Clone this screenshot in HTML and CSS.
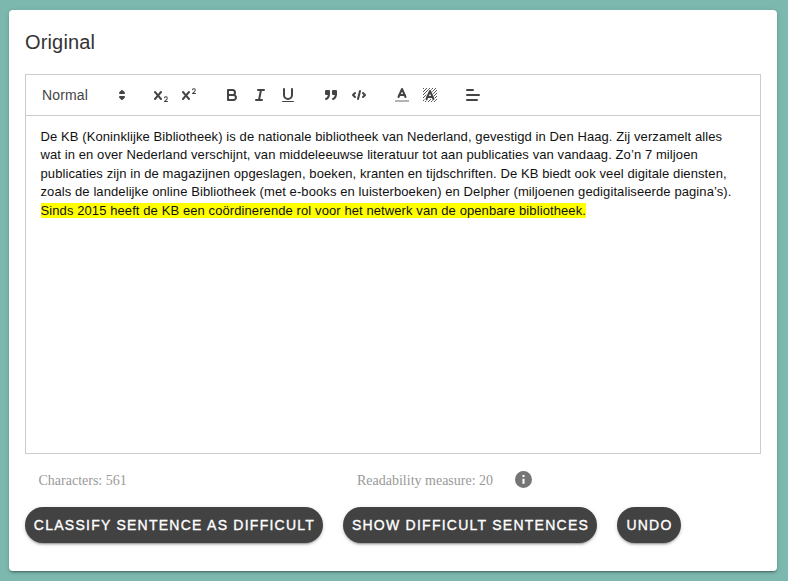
FILE: index.html
```html
<!DOCTYPE html>
<html lang="nl">
<head>
<meta charset="utf-8">
<title>Original</title>
<link rel="stylesheet" href="styles.css">
</head>
<body>
<main class="card">
  <h1 class="title">Original</h1>
  <section class="editor">
    <div class="toolbar">
      <div class="formats">
        <div class="picker"><span>Normal</span>
          <svg class="icon" viewBox="0 0 18 18"><polygon class="fill-stroke" points="7 11 9 13 11 11 7 11"/><polygon class="fill-stroke" points="7 7 9 5 11 7 7 7"/></svg>
        </div>
      </div>
      <div class="formats">
        <button class="tool" aria-label="Subscript"><svg class="icon" viewBox="0 0 18 18"><path class="fill" d="M15.5,15H13.861a3.858,3.858,0,0,0,1.914-2.975,1.8,1.8,0,0,0-1.6-1.751A1.921,1.921,0,0,0,12.021,11.7a0.50013,0.50013,0,1,0,.957.291h0a0.914,0.914,0,0,1,1.053-.725,0.81,0.81,0,0,1,.744.762c0,1.076-1.16971,1.86982-1.93971,2.43082A1.45639,1.45639,0,0,0,12,15.5a0.5,0.5,0,0,0,.5.5h3A0.5,0.5,0,0,0,15.5,15Z"/><path class="fill" d="M9.65,5.241a1,1,0,0,0-1.409.108L6,7.964,3.759,5.349A1,1,0,0,0,2.192,6.59178Q2.21541,6.6213,2.241,6.649L4.684,9.5,2.241,12.35A1,1,0,0,0,3.71,13.70722q0.02557-.02768.049-0.05722L6,11.036,8.241,13.65a1,1,0,1,0,1.567-1.24277Q9.78459,12.3777,9.759,12.35L7.316,9.5,9.759,6.651A1,1,0,0,0,9.65,5.241Z"/></svg></button>
        <button class="tool" aria-label="Superscript"><svg class="icon" viewBox="0 0 18 18"><path class="fill" d="M15.5,7H13.861a4.015,4.015,0,0,0,1.914-2.975,1.8,1.8,0,0,0-1.6-1.751A1.922,1.922,0,0,0,12.021,3.7a0.5,0.5,0,1,0,.957.291,0.917,0.917,0,0,1,1.053-.725,0.81,0.81,0,0,1,.744.762c0,1.077-1.164,1.925-1.934,2.486A1.423,1.423,0,0,0,12,7.5a0.5,0.5,0,0,0,.5.5h3A0.5,0.5,0,0,0,15.5,7Z"/><path class="fill" d="M9.651,5.241a1,1,0,0,0-1.41.108L6,7.964,3.759,5.349a1,1,0,1,0-1.519,1.3L4.683,9.5,2.241,12.35a1,1,0,1,0,1.519,1.3L6,11.036,8.241,13.65a1,1,0,0,0,1.519-1.3L7.317,9.5,9.759,6.651A1,1,0,0,0,9.651,5.241Z"/></svg></button>
      </div>
      <div class="formats">
        <button class="tool" aria-label="Bold"><svg class="icon" viewBox="0 0 18 18"><path class="stroke" d="M5,4H9.5A2.5,2.5,0,0,1,12,6.5v0A2.5,2.5,0,0,1,9.5,9H5A0,0,0,0,1,5,9V4A0,0,0,0,1,5,4Z"/><path class="stroke" d="M5,9h5.5A2.5,2.5,0,0,1,13,11.5v0A2.5,2.5,0,0,1,10.5,14H5a0,0,0,0,1,0,0V9A0,0,0,0,1,5,9Z"/></svg></button>
        <button class="tool" aria-label="Italic"><svg class="icon" viewBox="0 0 18 18"><path class="stroke" d="M7 4H13M5 14H11M8 14L10 4"/></svg></button>
        <button class="tool" aria-label="Underline"><svg class="icon" viewBox="0 0 18 18"><path class="stroke" d="M5,3V9a4.012,4.012,0,0,0,4,4H9a4.012,4.012,0,0,0,4-4V3"/><rect class="fill" height="1" rx=".5" ry=".5" width="12" x="3" y="15"/></svg></button>
      </div>
      <div class="formats">
        <button class="tool" aria-label="Blockquote"><svg class="icon" viewBox="0 0 18 18"><rect class="fill-stroke" height="3" width="3" x="4" y="5"/><rect class="fill-stroke" height="3" width="3" x="11" y="5"/><path class="fill-stroke" d="M7,8c0,4.031-3,5-3,5"/><path class="fill-stroke" d="M14,8c0,4.031-3,5-3,5"/></svg></button>
        <button class="tool" aria-label="Code block"><svg class="icon" viewBox="0 0 18 18"><polyline class="stroke" points="5 7 3 9 5 11"/><polyline class="stroke" points="13 7 15 9 13 11"/><line class="stroke" x1="10" x2="8" y1="5" y2="13"/></svg></button>
      </div>
      <div class="formats">
        <button class="tool" aria-label="Text color"><svg class="icon" viewBox="0 0 18 18"><line class="stroke faded" x1="2" x2="16" y1="15" y2="15"/><polyline class="stroke" points="5.5 11 9 3 12.5 11"/><line class="stroke" x1="11.63" x2="6.38" y1="9" y2="9"/></svg></button>
        <button class="tool" aria-label="Background color"><svg class="icon" viewBox="0 0 18 18"><defs><clipPath id="hatch"><path clip-rule="evenodd" d="M2 2H16V16H2ZM7.5 3.5H10.5L14.5 13V14.5H11.5L11 13H7L6.4 14.5H3.5V13Z"/></clipPath></defs><path class="thin" clip-path="url(#hatch)" d="M1 4L4 1M1 7L7 1M1 10L10 1M1 13L13 1M1 16L16 1M2 18L18 2M5 18L18 5M8 18L18 8M11 18L18 11M14 18L18 14"/><polyline class="stroke" points="5.5 13 9 5 12.5 13"/><line class="stroke" x1="11.63" x2="6.38" y1="11" y2="11"/></svg></button>
      </div>
      <div class="formats">
        <button class="tool" aria-label="Align"><svg class="icon" viewBox="0 0 18 18"><path class="stroke" d="M3 9H15M3 14H13M3 4H9"/></svg></button>
      </div>
    </div>
    <div class="content">De KB (Koninklijke Bibliotheek) is de nationale bibliotheek van Nederland, gevestigd in Den Haag. Zij verzamelt alles<br>wat in en over Nederland verschijnt, van middeleeuwse literatuur tot aan publicaties van vandaag. Zo’n 7 miljoen<br>publicaties zijn in de magazijnen opgeslagen, boeken, kranten en tijdschriften. De KB biedt ook veel digitale diensten,<br>zoals de landelijke online Bibliotheek (met e-books en luisterboeken) en Delpher (miljoenen gedigitaliseerde pagina’s).<br><mark>Sinds 2015 heeft de KB een coördinerende rol voor het netwerk van de openbare bibliotheek.</mark></div>
  </section>
  <div class="stats">
    <span class="characters">Characters: 561</span>
    <span>Readability measure: 20</span>
    <svg class="info" viewBox="2 2 20 20"><path d="M13.2,9.2H10.8V6.8H13.2M13.2,17H10.8V11H13.2M12,2A10,10 0 0,0 2,12A10,10 0 0,0 12,22A10,10 0 0,0 22,12A10,10 0 0,0 12,2Z"/></svg>
  </div>
  <div class="actions">
    <button class="action classify">CLASSIFY SENTENCE AS DIFFICULT</button>
    <button class="action show">SHOW DIFFICULT SENTENCES</button>
    <button class="action undo">UNDO</button>
  </div>
</main>
</body>
</html>
```

FILE: styles.css
```css
* { box-sizing: border-box; }
body {
  margin: 0;
  height: 581px;
  padding: 10px 11px 10px 9px;
  background: #7cb8ae;
  font-family: "Liberation Sans", Arial, sans-serif;
}
button { border: 0; background: none; font: inherit; }
.card {
  height: 561px;
  padding: 16px;
  background: #fff;
  border-radius: 4px;
  box-shadow: 0 3px 1px -2px rgba(0,0,0,.2), 0 2px 2px rgba(0,0,0,.14), 0 1px 5px rgba(0,0,0,.12);
}
.title {
  margin: 0;
  height: 48px;
  font-size: 20px;
  font-weight: 400;
  line-height: 32px;
  letter-spacing: .15px;
  color: #333;
}
.editor {
  height: 380px;
  border: 1px solid #ccc;
}
.toolbar {
  display: flex;
  height: 41px;
  padding: 8px;
  border-bottom: 1px solid #ccc;
}
.formats { display: flex; margin-right: 15px; }
.picker {
  display: flex;
  align-items: center;
  justify-content: space-between;
  width: 98px;
  height: 24px;
  padding: 0 1px 0 8px;
  font-size: 14px;
  letter-spacing: .15px;
  font-weight: 500;
  color: #444;
}
.tool { width: 28px; height: 24px; padding: 3px 5px; }
.icon { display: block; width: 18px; height: 18px; }
.stroke, .fill-stroke, .thin {
  stroke: #444;
  stroke-width: 2;
  stroke-linecap: round;
  stroke-linejoin: round;
}
.stroke, .thin { fill: none; }
.fill, .fill-stroke { fill: #444; }
.thin { stroke-width: .9; }
.faded { opacity: .4; stroke-linecap: butt; }
.content {
  padding: 12px 14.5px;
  font-size: 13px;
  line-height: 18.46px;
  letter-spacing: .094px;
  white-space: nowrap;
  color: #111;
}
mark { background: #ff0; color: inherit; }
.stats {
  display: flex;
  align-items: center;
  height: 53px;
  padding-left: 13.5px;
  font-family: "Liberation Serif", "Times New Roman", serif;
  font-size: 14px;
  color: #999;
}
.characters { width: 318.5px; }
.info { width: 17px; height: 17px; margin: 0 0 2px 22px; fill: #757575; }
.actions { display: flex; gap: 20px; }
.action {
  height: 36px;
  padding: 0 0 0 1px;
  border-radius: 18px;
  background: #424242;
  color: #fff;
  font-size: 14px;
  font-weight: 500;
  letter-spacing: 1.25px;
  -webkit-text-stroke: .35px #fff;
  white-space: nowrap;
  box-shadow: 0 3px 1px -2px rgba(0,0,0,.2), 0 2px 2px rgba(0,0,0,.14), 0 1px 5px rgba(0,0,0,.12);
}
.classify { width: 298px; }
.show { width: 254px; }
.undo { width: 64px; }
```
